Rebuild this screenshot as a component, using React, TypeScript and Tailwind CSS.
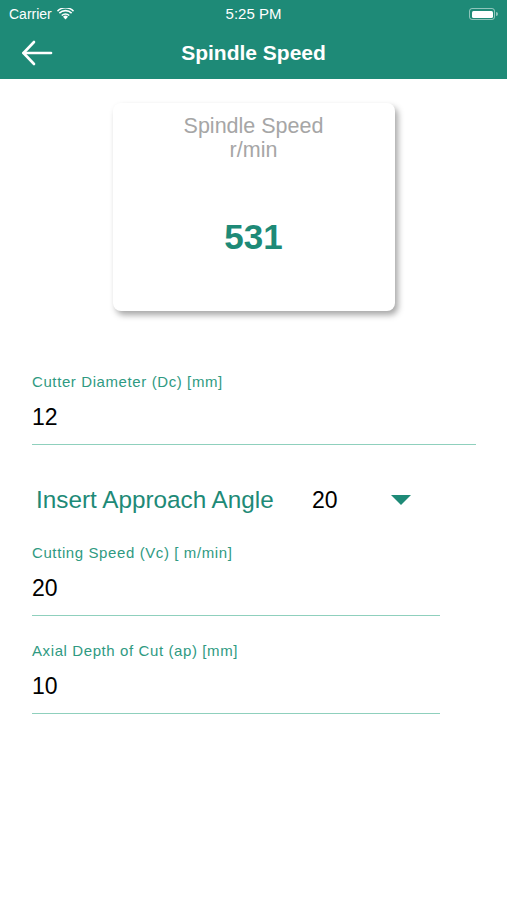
function Field({ label, value, lineWidth }: { label: string; value: string; lineWidth: string }) {
  return (
    <div className="pl-[32px]">
      <div className="text-[15px] leading-[18px] tracking-[0.6px] text-[#2f9a82]">{label}</div>
      <div className={`mt-[11px] h-[43px] border-b border-[#8fd0bd] text-[23px] leading-[30px] text-black ${lineWidth}`}>
        {value}
      </div>
    </div>
  );
}

export default function App() {
  return (
    <div className="w-[507px] h-[900px] bg-white font-['Liberation_Sans',Arial,sans-serif]">
      <header className="bg-[#1e8a77] text-white h-[79px]">
        <div className="h-[28px] grid grid-cols-3 items-center px-[9px] text-[14px]">
          <div className="flex items-center gap-[5px]">
            <span>Carrier</span>
            <svg width="17" height="12" viewBox="0 0 17 12" fill="white">
              <path d="M8.5 11.5 L6 8.8 A3.6 3.6 0 0 1 11 8.8 Z" />
              <path d="M4.2 6.9 A6.2 6.2 0 0 1 12.8 6.9 L11.7 8.1 A4.6 4.6 0 0 0 5.3 8.1 Z" />
              <path d="M1.8 4.5 A9.6 9.6 0 0 1 15.2 4.5 L14.1 5.7 A8 8 0 0 0 2.9 5.7 Z" />
              <path d="M0 2.6 A12 12 0 0 1 17 2.6 L16 3.7 A10.5 10.5 0 0 0 1 3.7 Z" />
            </svg>
          </div>
          <span className="text-center text-[15px]">5:25 PM</span>
          <div className="flex items-center justify-end">
            <div className="w-[26px] h-[12px] rounded-[3px] border border-white/50 p-[1.5px]">
              <div className="w-full h-full rounded-[1.5px] bg-white" />
            </div>
            <div className="w-[2px] h-[4px] rounded-r-sm bg-white/50 ml-[1px]" />
          </div>
        </div>
        <div className="relative h-[50px] flex items-center justify-center">
          <svg
            className="absolute left-[21px] top-[12px]"
            width="32"
            height="26"
            viewBox="0 0 32 26"
            fill="none"
            stroke="white"
            strokeWidth="2.6"
            strokeLinecap="round"
            strokeLinejoin="round"
          >
            <path d="M2.5 13 H30" />
            <path d="M13 2 L2.5 13 L13 24" />
          </svg>
          <span className="text-[21px] font-bold">Spindle Speed</span>
        </div>
      </header>

      <div className="flex justify-center pt-[24px]">
        <div className="w-[282px] h-[208px] rounded-[8px] bg-white shadow-[3px_4px_6px_rgba(0,0,0,0.35)] flex flex-col items-center pt-[11px]">
          <div className="text-[21.5px] leading-[24px] text-[#a6a6a6] text-center">
            Spindle Speed
            <br />
            r/min
          </div>
          <div className="mt-[56px] text-[35px] leading-[38px] font-bold text-[#1e8a77]">531</div>
        </div>
      </div>

      <div className="mt-[62px]">
        <Field label="Cutter Diameter (Dc) [mm]" value="12" lineWidth="w-[444px]" />
      </div>

      <div className="mt-[40px] pl-[36px] flex items-center h-[30px]">
        <span className="text-[24.3px] text-[#1e8a77] w-[276px]">Insert Approach Angle</span>
        <span className="text-[23px] text-black">20</span>
        <svg className="ml-[53px]" width="20" height="10" viewBox="0 0 20 10">
          <path d="M0 0 L20 0 L10 10 Z" fill="#1e8a77" />
        </svg>
      </div>

      <div className="mt-[29px]">
        <Field label="Cutting Speed (Vc) [ m/min]" value="20" lineWidth="w-[408px]" />
      </div>
      <div className="mt-[26px]">
        <Field label="Axial Depth of Cut (ap) [mm]" value="10" lineWidth="w-[408px]" />
      </div>
    </div>
  );
}
